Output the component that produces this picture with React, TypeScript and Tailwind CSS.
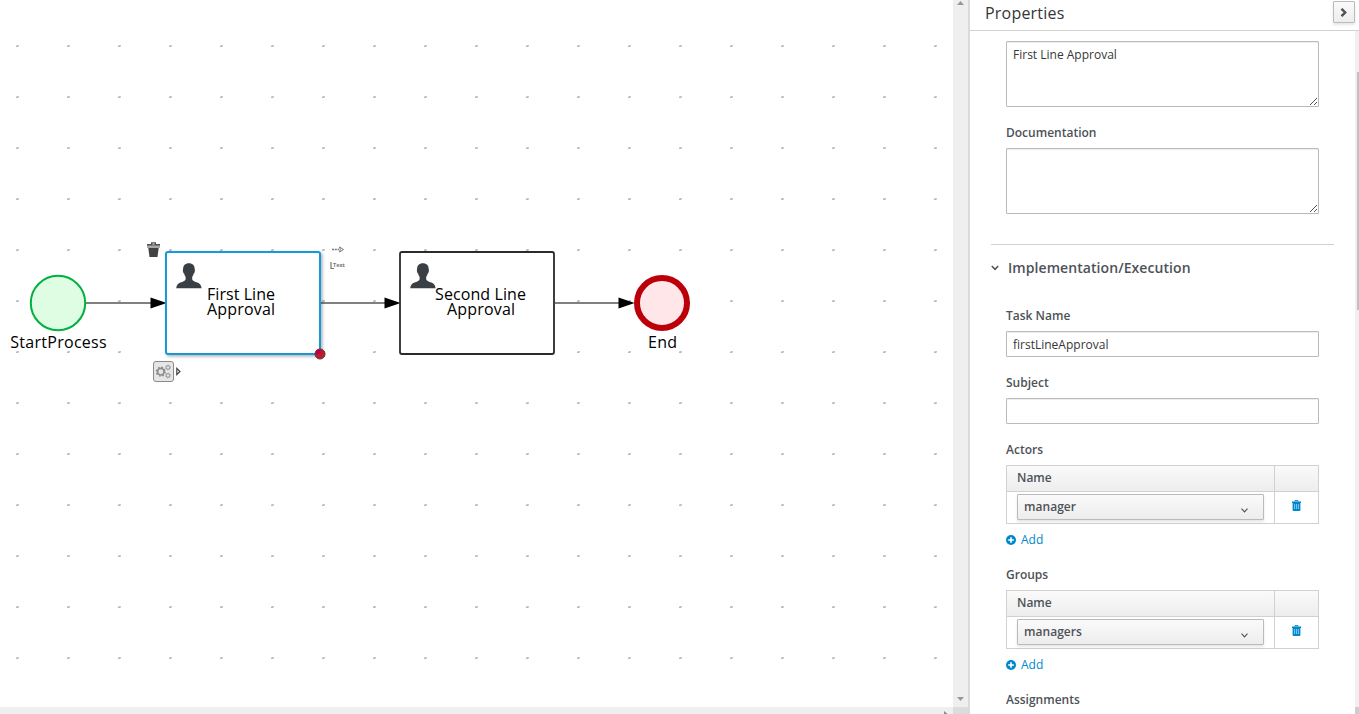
import React from "react";

const COLS = Array.from({ length: 19 }, (_, i) => 17 + i * 51);
const ROWS = Array.from({ length: 13 }, (_, i) => 46 + i * 51);

function Grid() {
  return (
    <g>
      {ROWS.map((y) =>
        COLS.map((x) => (
          <g key={`${x}-${y}`}>
            <rect x={x - 1} y={y - 1} width="3" height="2" fill="#dadada" />
            <rect x={x - 1} y={y} width="2" height="1" fill="#b8b8b8" />
            <rect x={x} y={y - 1} width="2" height="1" fill="#c4c4c4" />
          </g>
        )),
      )}
    </g>
  );
}

function UserGlyph({ x, y }: { x: number; y: number }) {
  return (
    <path
      transform={`translate(${x} ${y})`}
      fill="#393f44"
      d="M12.7 0C9 0 6.800 2.300 6.900 6C6.600 6.300 6.500 7.400 7 8.900C7.300 9.800 7.600 10 7.900 10.200C8.200 11.800 8.900 12.700 9.400 13.500V16.200C8.800 17.500 6.500 18.400 4.300 19.300C1.800 20.300 .5 21.800 0 25H25.400C24.900 21.800 23.600 20.300 21.100 19.300C18.900 18.400 16.600 17.500 16 16.200V13.500C16.500 12.700 17.200 11.800 17.500 10.200C17.800 10 18.100 9.800 18.400 8.900C18.900 7.400 18.800 6.300 18.500 6C18.600 2.300 16.400 0 12.700 0Z"
    />
  );
}

function Flow({ from, to }: { from: number; to: number }) {
  return (
    <g>
      <rect x={from} y="302" width={to - from - 15} height="2" fill="#808080" />
      <path d={`M${to + 0.7} 303L${to - 15.5} 297.500V308.500Z`} fill="#000" />
    </g>
  );
}

function Gear({ cx, cy, r }: { cx: number; cy: number; r: number }) {
  return (
    <g fill="none" stroke="#8b8b8b">
      <circle cx={cx} cy={cy} r={r} strokeWidth={r * 0.5} />
      <circle cx={cx} cy={cy} r={r * 1.35} strokeWidth={r * 0.4} strokeDasharray={`${r * 0.53} ${r * 0.53}`} />
    </g>
  );
}

function Diagram() {
  return (
    <svg
      className="block h-[707px] w-[953px] shrink-0 bg-white font-['Open_Sans',sans-serif]"
      viewBox="0 0 953 707"
      fontSize="16"
      textAnchor="middle"
    >
      <defs>
        <filter id="lift" x="-10%" y="-10%" width="125%" height="125%">
          <feDropShadow dx="1.500" dy="1.500" stdDeviation="1.500" floodColor="#000" floodOpacity="0.3" />
        </filter>
      </defs>
      <Grid />

      <Flow from={86} to={166} />
      <Flow from={321} to={400} />
      <Flow from={555} to={634} />

      <circle cx="58" cy="303" r="27.200" fill="#dffde3" stroke="#00b140" strokeWidth="2" />
      <text x="58.400" y="348" textLength="96.500">StartProcess</text>

      <rect x="166" y="252" width="154" height="102" rx="2" fill="#fff" stroke="#1399d6" strokeWidth="2" filter="url(#lift)" />
      <UserGlyph x={176.200} y={263.300} />
      <text x="241" y="300" textLength="68">First Line</text>
      <text x="241" y="315" textLength="68">Approval</text>
      <circle cx="320" cy="354" r="5" fill="#b5202c" stroke="#7e2630" />
      <path d="M316 354.500V350.500Q319.500 349 320.500 350.500V353.500Z" fill="#b4004f" />

      <rect x="400" y="252" width="154" height="102" rx="2" fill="#fff" stroke="#292b2d" strokeWidth="1.800" />
      <UserGlyph x={410.200} y={263.300} />
      <text x="480.500" y="300" textLength="91">Second Line</text>
      <text x="481" y="315" textLength="68">Approval</text>

      <circle cx="662" cy="303" r="25" fill="#ffe6e8" stroke="#bb0009" strokeWidth="6" />
      <text x="662.500" y="348" textLength="29">End</text>

      <g>
        <path d="M151 242.300H156V244H160V247.500H147V244H151Z" fill="#505050" />
        <path d="M152.500 243.500H154.500V244.500H152.500Z" fill="#fff" />
        <path d="M147 245.500H160V247H147Z" fill="#a8a8a8" />
        <path d="M148.300 248H158.700L157.500 257H149.500Z" fill="#424242" />
      </g>

      <g fill="none" stroke="#777">
        <path d="M332 249.500H339" strokeDasharray="2 .8" strokeWidth="1.600" />
        <path d="M339.500 247L343.500 249.500L339.500 252L340.300 249.500Z" strokeWidth="1" />
        <path d="M331 262V268.500H334" strokeWidth="1.200" />
      </g>
      <text x="339" y="267" fontSize="5.500" fontWeight="700" fill="#777" textLength="12" lengthAdjust="spacingAndGlyphs">Text</text>

      <rect x="153.500" y="361.500" width="20" height="20" rx="2.500" fill="#e6e6e6" stroke="#8a8a8a" />
      <Gear cx={160.800} cy={371.700} r={3.300} />
      <Gear cx={168} cy={367.500} r={1.800} />
      <Gear cx={168} cy={375.500} r={1.800} />
      <path d="M176.800 368.500V374.500L180 371.500Z" fill="#fff" stroke="#444" strokeWidth="1.200" />
    </svg>
  );
}

function Label({ children }: { children: React.ReactNode }) {
  return <div className="mb-[7px] h-[17px] pt-px font-semibold leading-4 text-[#4d5258]">{children}</div>;
}

function Area({ label, value }: { label?: string; value?: string }) {
  return (
    <div>
      {label && <Label>{label}</Label>}
      <div className="flex h-[66px] rounded-[1px] border border-[#bbb] bg-white px-1.5 pt-1 leading-[18px] shadow-[inset_0_1px_1px_rgba(3,3,3,0.075)]">
        <span className="flex-1 text-[#363636]">{value}</span>
        <svg className="-mr-[7px] h-[10px] w-[10px] self-end" viewBox="0 0 10 10" shapeRendering="crispEdges">
          <path d="M1 8h1v1H1zM2 7h1v1H2zM3 6h1v1H3zM4 5h1v1H4zM5 4h1v1H5zM6 3h1v1H6zM7 2h1v1H7zM5 8h1v1H5zM6 7h1v1H6zM7 6h1v1H7z" fill="#555" />
        </svg>
      </div>
    </div>
  );
}

function Field({ label, value }: { label: string; value?: string }) {
  return (
    <div className="mb-[17px]">
      <Label>{label}</Label>
      <div className="h-[26px] rounded-[1px] border border-[#bbb] px-1.5 pt-px leading-6 text-[#363636] shadow-[inset_0_1px_1px_rgba(3,3,3,0.075)]">
        {value}
      </div>
    </div>
  );
}

function Assignees({ label, value }: { label: string; value: string }) {
  return (
    <div className="h-[125px]">
      <Label>{label}</Label>
      <div className="grid h-[59px] grid-cols-[268px_1fr] grid-rows-[26px_1fr] border border-[#d1d1d1]">
        <div className="border-r border-b border-[#d1d1d1] bg-gradient-to-b from-[#fafafa] to-[#ededed] pl-2.5 font-semibold leading-6 text-[#4d5258]">
          Name
        </div>
        <div className="border-b border-[#d1d1d1] bg-gradient-to-b from-[#fafafa] to-[#ededed]" />
        <div className="border-r border-[#d1d1d1] px-2.5 pt-0.5">
          <div className="flex h-[26px] items-center justify-between rounded-[1px] border border-[#bbb] bg-gradient-to-b from-[#fafafa] to-[#ededed] pr-[15px] pl-1.5 font-semibold tracking-[0.04px] text-[#4d5258] shadow-[0_2px_3px_rgba(3,3,3,0.1)]">
            <span>{value}</span>
            <svg className="mt-1.5 h-[5px] w-[7px]" viewBox="0 0 7 5">
              <path d="M.5 .7L3.500 3.900L6.500 .7" fill="none" stroke="#4d5258" strokeWidth="1.100" />
            </svg>
          </div>
        </div>
        <div className="flex items-start justify-center pt-2">
          <svg className="h-[11px] w-[9px]" viewBox="0 0 9 11">
            <path d="M3 1.500V.6H6V1.500" fill="none" stroke="#0088ce" />
            <path d="M0 1.500H9V3H0ZM.6 3H8.400V10Q8.400 11 7.500 11H1.500Q.6 11 .6 10Z" fill="#0088ce" />
            <path d="M2.600 4V9M4.500 4V9M6.400 4V9" stroke="#a6d8f0" strokeWidth=".8" />
          </svg>
        </div>
      </div>
      <div className="mt-2 flex h-4 items-center gap-[5px] text-[#0088ce]">
        <svg className="h-2.5 w-2.5" viewBox="0 0 10 10">
          <circle cx="5" cy="5" r="5" fill="#0088ce" />
          <path d="M5 2.200V7.800M2.200 5H7.800" stroke="#fff" strokeWidth="1.600" />
        </svg>
        <span>Add</span>
      </div>
    </div>
  );
}

export default function App() {
  return (
    <div className="flex h-[714px] w-[1359px] overflow-hidden bg-white font-['Open_Sans',sans-serif] text-xs">
      <main className="flex w-[968px] shrink-0 flex-col">
        <div className="flex">
          <Diagram />
          <div className="flex w-[15px] flex-col items-center justify-between bg-[#efefef] pt-px pb-1.5">
            <svg className="h-1 w-[7px]" viewBox="0 0 7 4"><path d="M0 4L3.500 0L7 4Z" fill="#999" /></svg>
            <svg className="h-1 w-[7px]" viewBox="0 0 7 4"><path d="M0 0L3.500 4L7 0Z" fill="#999" /></svg>
          </div>
        </div>
        <div className="flex h-[7px]">
          <div className="flex w-[953px] items-end justify-end bg-[#efefef] pr-[5px]">
            <svg className="h-[3px] w-1" viewBox="0 0 4 3"><path d="M0 0V3H3.500Z" fill="#888" /></svg>
          </div>
          <div className="flex-1 bg-[#dcdcdc]" />
        </div>
      </main>

      <aside className="flex min-w-0 flex-1 flex-col border-l-2 border-[#dadada]">
        <header className="flex h-[31px] shrink-0 items-start justify-between border-b border-[#d1d1d1] pr-1 pl-[15px]">
          <h1 className="pt-0.5 text-base leading-[22px] tracking-[0.2px] text-[#363636]">Properties</h1>
          <button className="mt-px flex h-[22px] w-[22px] items-center justify-center rounded-[1px] border border-[#bbb] bg-gradient-to-b from-[#fafafa] to-[#ededed] pr-px shadow-[0_2px_3px_rgba(3,3,3,0.1)]">
            <svg className="h-[9px] w-[7px]" viewBox="0 0 7 9">
              <path d="M1.500 .8L5.200 4.500L1.500 8.200" fill="none" stroke="#4d5258" strokeWidth="2.400" />
            </svg>
          </button>
        </header>
        <div className="flex min-h-0 flex-1">
          <div className="min-w-0 flex-1 overflow-hidden px-[21px] pt-2.5">
            <div className="mx-[15px] flex flex-col gap-[17px]">
              <Area value="First Line Approval" />
              <Area label="Documentation" />
            </div>
            <section className="mt-[30px] border-t border-[#d1d1d1]">
              <h2 className="flex h-[46px] items-center gap-[9px] text-sm font-semibold tracking-[0.07px] text-[#4d5258]">
                <svg className="h-[6px] w-2" viewBox="0 0 8 6">
                  <path d="M.8 1L4 4.300L7.200 1" fill="none" stroke="#4d5258" strokeWidth="1.500" />
                </svg>
                Implementation/Execution
              </h2>
              <div className="mx-[15px] mt-4">
                <Field label="Task Name" value="firstLineApproval" />
                <Field label="Subject" />
                <Assignees label="Actors" value="manager" />
                <Assignees label="Groups" value="managers" />
                <Label>Assignments</Label>
              </div>
            </section>
          </div>
          <div className="flex w-1 flex-col items-end bg-[#f0f0f0]">
            <div className="mt-[41px] h-[238px] w-0.5 bg-[#c1c1c1]" />
            <div className="mt-auto h-[7px] w-1 bg-[#cdcdcd]" />
          </div>
        </div>
      </aside>
    </div>
  );
}
